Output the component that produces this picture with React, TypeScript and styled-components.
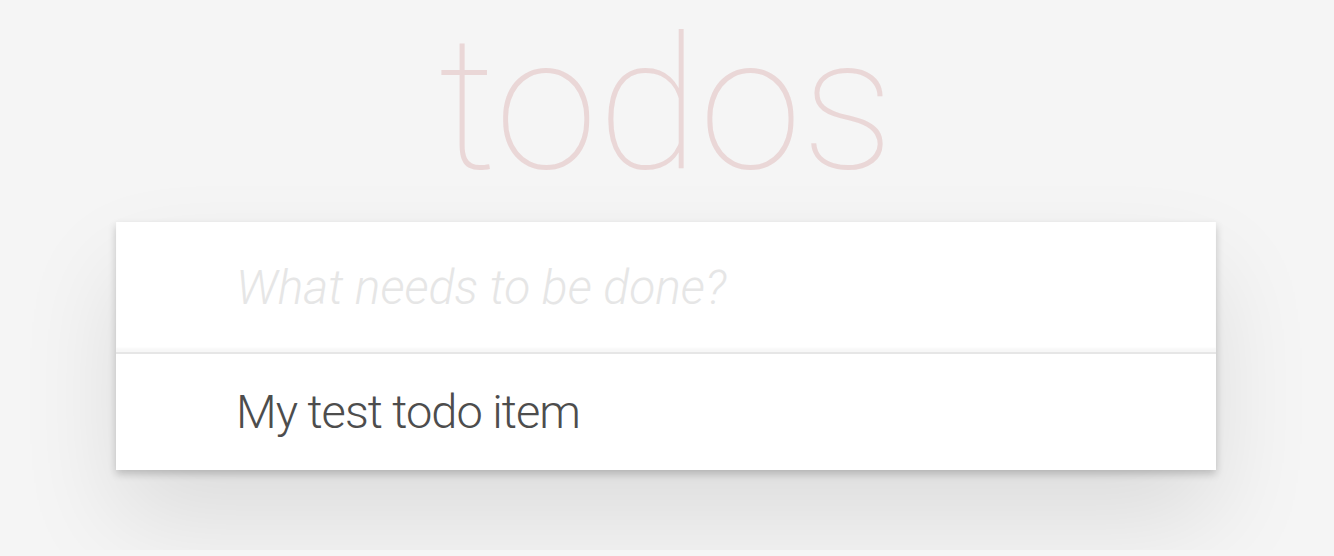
import React from "react";
import styled, { createGlobalStyle } from "styled-components";

const GlobalStyle = createGlobalStyle`
  html, body {
    margin: 0;
    padding: 0;
  }
  body {
    background: #f5f5f5;
    color: #4d4d4d;
    font-family: Roboto, "Helvetica Neue", Helvetica, Arial, sans-serif;
    font-weight: 300;
    -webkit-font-smoothing: antialiased;
  }
`;

const Page = styled.div`
  width: 1100px;
  margin: 0 auto;
  padding-bottom: 80px;
  position: relative;
  left: -1px;
`;

const Title = styled.h1`
  margin: 0 0 13px;
  height: 209px;
  font-size: 186px;
  line-height: 209px;
  font-weight: 100;
  text-align: center;
  color: rgba(175, 47, 47, 0.15);
  text-rendering: optimizeLegibility;
`;

const App = styled.section`
  background: #fff;
  box-shadow: 0 4px 8px 0 rgba(0, 0, 0, 0.2), 0 50px 100px 0 rgba(0, 0, 0, 0.1);
`;

const NewTodo = styled.input`
  display: block;
  width: 100%;
  height: 130px;
  box-sizing: border-box;
  margin: 0;
  padding: 0 32px 0 120px;
  border: none;
  outline: none;
  background: transparent;
  font-family: inherit;
  font-size: 48px;
  font-weight: 300;
  color: inherit;
  box-shadow: inset 0 -4px 2px rgba(0, 0, 0, 0.03);

  &::placeholder {
    font-style: italic;
    font-weight: 300;
    color: #e6e6e6;
  }
`;

const List = styled.ul`
  margin: 0;
  padding: 0;
  list-style: none;
  border-top: 2px solid #e6e6e6;
`;

const Item = styled.li`
  padding: 30px 30px 30px 120px;
  font-size: 47px;
  line-height: 56px;
  letter-spacing: -1px;
  color: #4d4d4d;
  word-break: break-all;
`;

export default function TodoApp() {
  return (
    <>
      <GlobalStyle />
      <Page>
        <Title>todos</Title>
        <App>
          <NewTodo placeholder="What needs to be done?" />
          <List>
            <Item>My test todo item</Item>
          </List>
        </App>
      </Page>
    </>
  );
}
